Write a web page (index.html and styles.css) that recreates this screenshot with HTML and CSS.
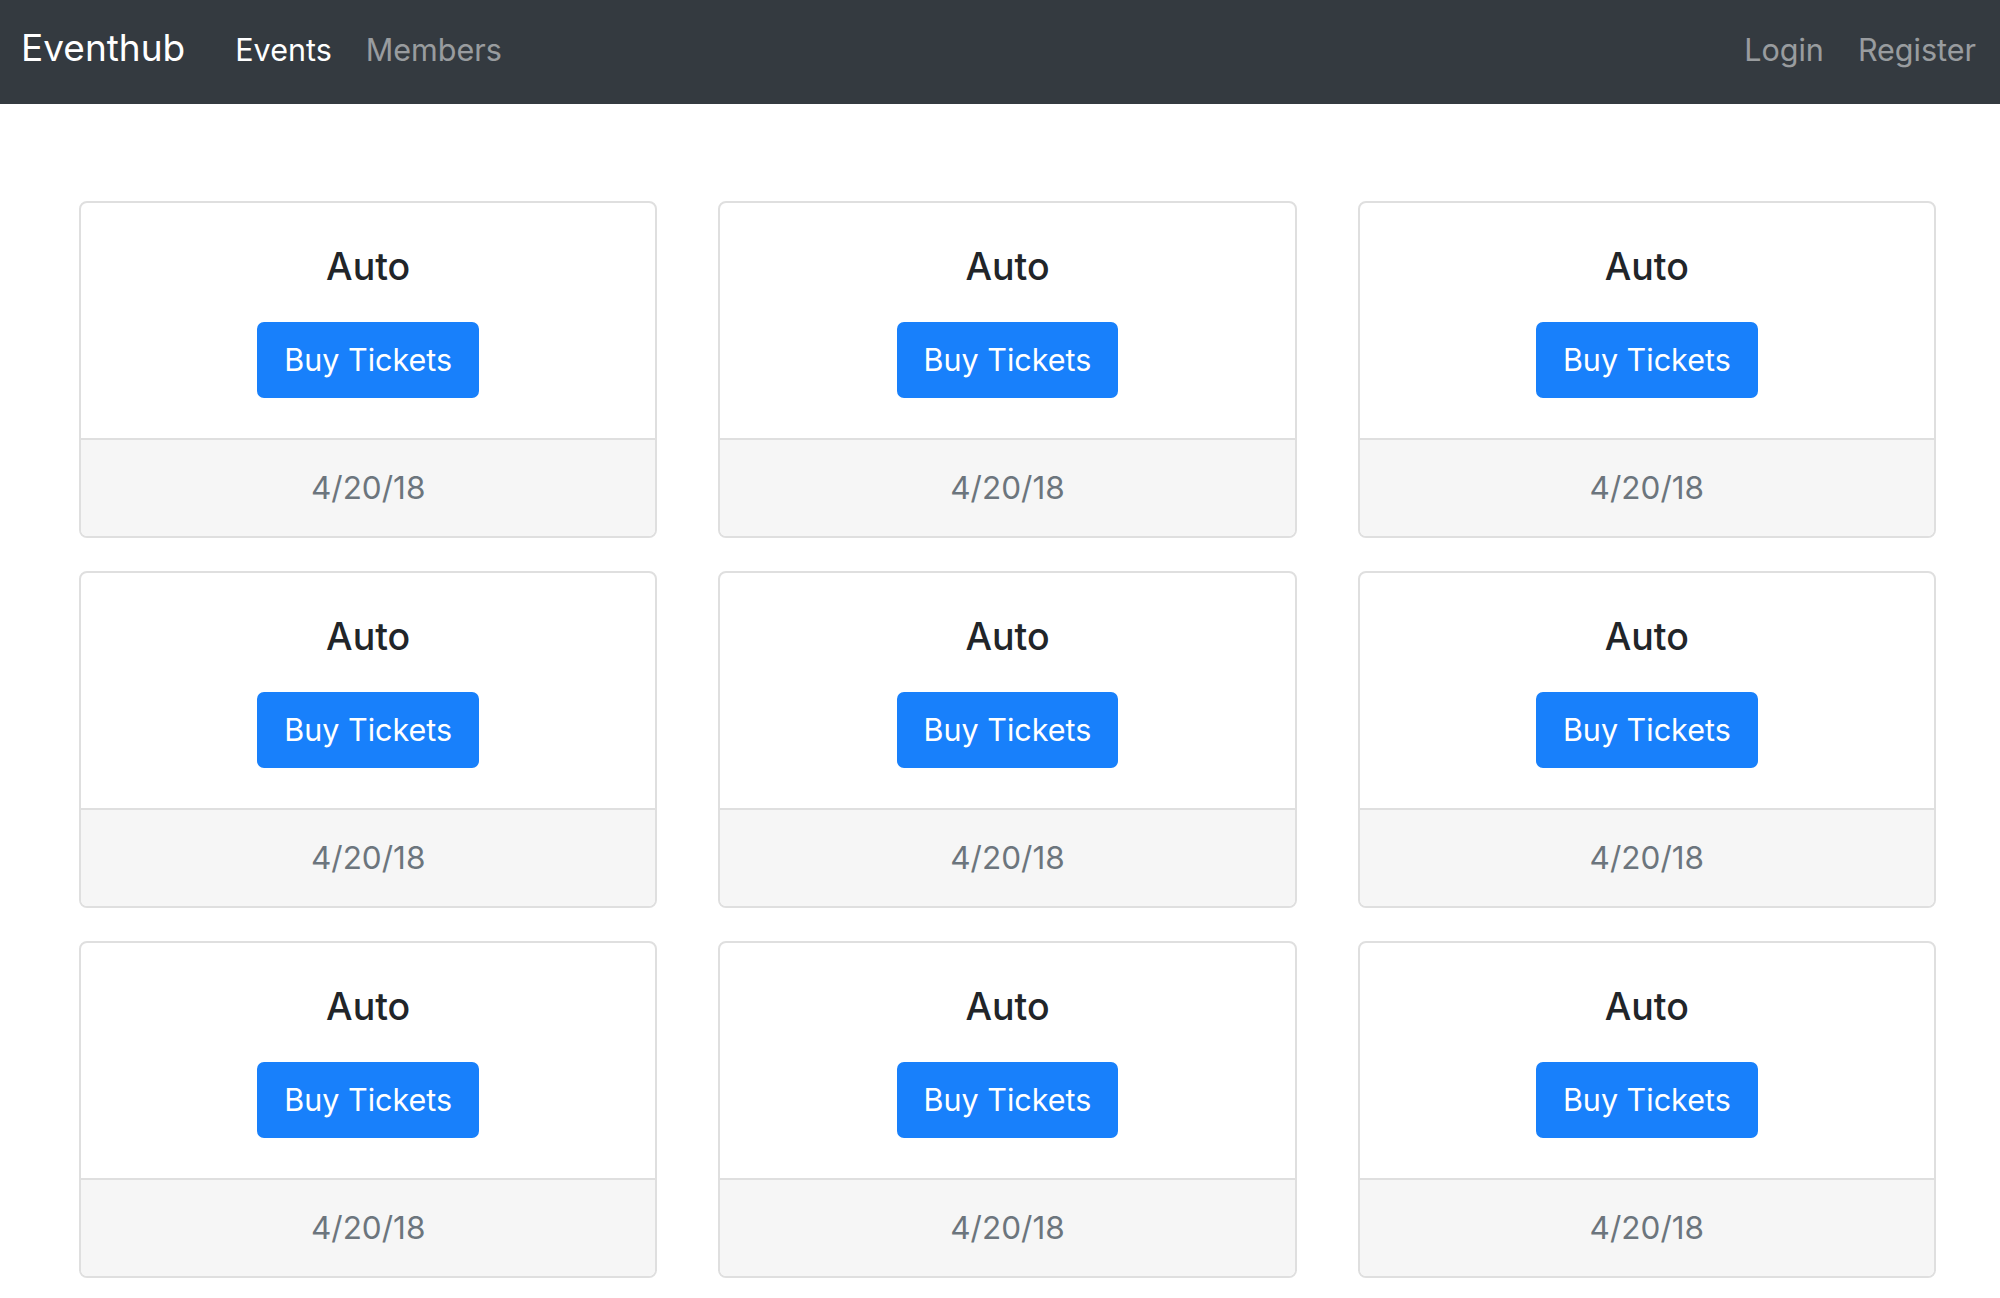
FILE: index.html
```html
<!DOCTYPE html>
<html lang="en">
<head>
<meta charset="utf-8">
<title>Eventhub</title>
<link rel="stylesheet" href="styles.css">
</head>
<body>
<nav class="navbar">
  <a class="brand" href="#">Eventhub</a>
  <div class="nav-left">
    <a class="nav-link active" href="#">Events</a>
    <a class="nav-link" href="#">Members</a>
  </div>
  <div class="nav-right">
    <a class="nav-link" href="#">Login</a>
    <a class="nav-link" href="#">Register</a>
  </div>
</nav>
<main class="container">
  <div class="grid">
    <div class="card"><div class="card-body"><h5 class="card-title">Auto</h5><a class="btn" href="#">Buy Tickets</a></div><div class="card-footer">4/20/18</div></div>
    <div class="card"><div class="card-body"><h5 class="card-title">Auto</h5><a class="btn" href="#">Buy Tickets</a></div><div class="card-footer">4/20/18</div></div>
    <div class="card"><div class="card-body"><h5 class="card-title">Auto</h5><a class="btn" href="#">Buy Tickets</a></div><div class="card-footer">4/20/18</div></div>
    <div class="card"><div class="card-body"><h5 class="card-title">Auto</h5><a class="btn" href="#">Buy Tickets</a></div><div class="card-footer">4/20/18</div></div>
    <div class="card"><div class="card-body"><h5 class="card-title">Auto</h5><a class="btn" href="#">Buy Tickets</a></div><div class="card-footer">4/20/18</div></div>
    <div class="card"><div class="card-body"><h5 class="card-title">Auto</h5><a class="btn" href="#">Buy Tickets</a></div><div class="card-footer">4/20/18</div></div>
    <div class="card"><div class="card-body"><h5 class="card-title">Auto</h5><a class="btn" href="#">Buy Tickets</a></div><div class="card-footer">4/20/18</div></div>
    <div class="card"><div class="card-body"><h5 class="card-title">Auto</h5><a class="btn" href="#">Buy Tickets</a></div><div class="card-footer">4/20/18</div></div>
    <div class="card"><div class="card-body"><h5 class="card-title">Auto</h5><a class="btn" href="#">Buy Tickets</a></div><div class="card-footer">4/20/18</div></div>
  </div>
</main>
</body>
</html>
```

FILE: styles.css
```css
* { box-sizing: border-box; }

html, body {
  margin: 0;
  padding: 0;
  background: #ffffff;
  font-family: Inter, "Noto Sans", "Liberation Sans", sans-serif;
  color: #212529;
}

a { text-decoration: none; }

.navbar {
  height: 104px;
  background: #343a40;
  display: flex;
  align-items: baseline;
  padding: 24px 24px 0 21px;
}

.brand {
  color: #ffffff;
  font-size: 37px;
  line-height: 48px;
  font-weight: 400;
  margin-right: 50px;
}

.nav-left,
.nav-right {
  display: flex;
  align-items: baseline;
  gap: 34px;
}

.nav-right {
  margin-left: auto;
}

.nav-link {
  font-size: 30.5px;
  line-height: 48px;
  color: rgba(255, 255, 255, 0.5);
}

.nav-link.active {
  color: #ffffff;
}

.container {
  padding: 97px 64px 0 79px;
}

.grid {
  display: grid;
  grid-template-columns: repeat(3, 1fr);
  column-gap: 61px;
  row-gap: 33px;
}

.card {
  border: 2px solid #dfdfdf;
  border-radius: 8px;
  overflow: hidden;
  display: flex;
  flex-direction: column;
  background: #ffffff;
}

.card-body {
  padding: 40px;
  display: flex;
  flex-direction: column;
  align-items: center;
}

.card-title {
  margin: 0 0 31px 0;
  font-size: 37.5px;
  line-height: 48px;
  font-weight: 500;
  color: #212529;
  text-align: center;
}

.btn {
  display: inline-block;
  background: #1880fb;
  border: 2px solid #1880fb;
  border-radius: 7px;
  color: #ffffff;
  font-size: 30.5px;
  line-height: 48px;
  padding: 12px 25px;
  font-weight: 400;
}

.card-footer {
  border-top: 2px solid #dfdfdf;
  background: #f6f6f6;
  padding: 24px 40px;
  text-align: center;
  font-size: 31.5px;
  line-height: 48px;
  color: #6c757d;
}
```
